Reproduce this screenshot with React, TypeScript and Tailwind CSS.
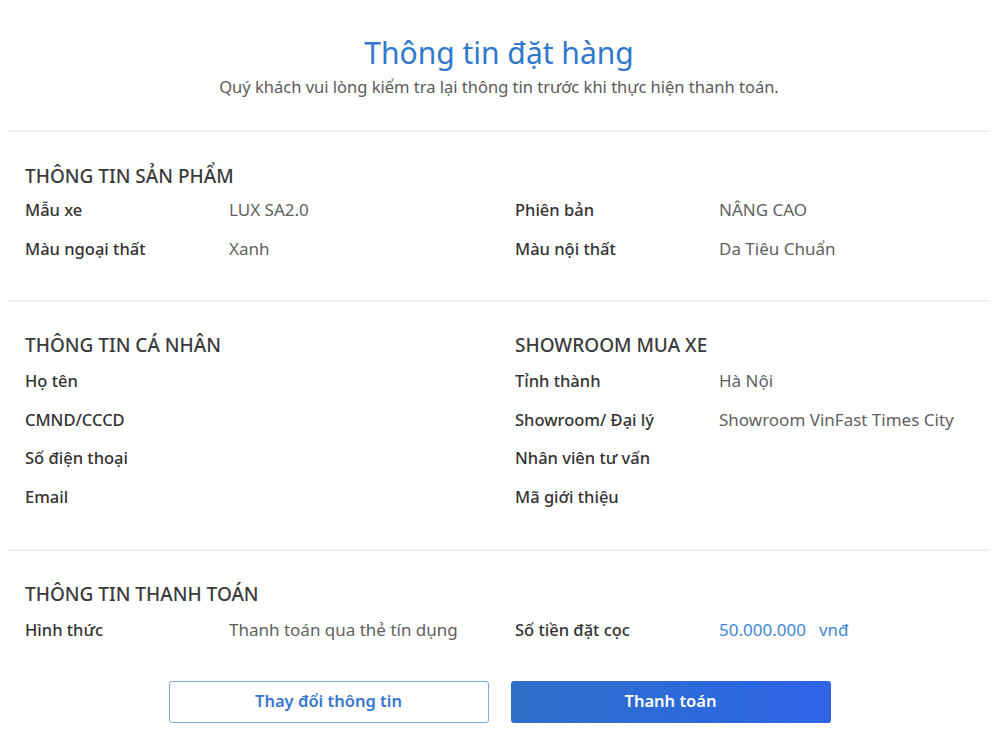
import React from "react";

const font = { fontFamily: '"Noto Sans", "Open Sans", sans-serif' };

function Row({ label, value, blue }: { label: string; value?: React.ReactNode; blue?: boolean }) {
  return (
    <div className="flex h-6 items-center leading-6">
      <div className="w-[204px] shrink-0 text-[16.5px] font-medium text-[#333333]">{label}</div>
      {value ? (
        <div className={blue ? "text-[17px] text-[#3f86d6]" : "text-[17px] text-[#5f5f5f]"}>{value}</div>
      ) : null}
    </div>
  );
}

function Header({ children }: { children: React.ReactNode }) {
  return <div className="h-6 text-[19px] font-medium uppercase leading-6 text-[#3a3a3a]">{children}</div>;
}

export default function App() {
  return (
    <div className="min-h-[741px] w-[1000px] bg-white" style={font}>
      <div className="mx-[8px] w-[982px]">
        <div className="flex flex-col items-center pt-[33px]">
          <h1 className="text-[30px] leading-[40px] text-[#2f78cc]">Thông tin đặt hàng</h1>
          <p className="mt-[4px] text-[16.5px] leading-[20px] text-[#5a5a5a]">
            Quý khách vui lòng kiểm tra lại thông tin trước khi thực hiện thanh toán.
          </p>
        </div>
        <div className="mt-[33px] h-[2px] bg-[#eef0f0]" />

        <section className="px-[17px] pt-[32px] pb-[39px]">
          <Header>Thông tin sản phẩm</Header>
          <div className="mt-[10px] grid grid-cols-[490px_1fr] gap-y-[15px]">
            <Row label="Mẫu xe" value="LUX SA2.0" />
            <Row label="Phiên bản" value="NÂNG CAO" />
            <Row label="Màu ngoại thất" value="Xanh" />
            <Row label="Màu nội thất" value="Da Tiêu Chuẩn" />
          </div>
        </section>
        <div className="h-[2px] bg-[#eef0f0]" />

        <section className="grid grid-cols-[490px_1fr] px-[17px] pt-[31px] pb-[40px]">
          <div>
            <Header>Thông tin cá nhân</Header>
            <div className="mt-[12px] flex flex-col gap-[14.5px]">
              <Row label="Họ tên" />
              <Row label="CMND/CCCD" />
              <Row label="Số điện thoại" />
              <Row label="Email" />
            </div>
          </div>
          <div>
            <Header>Showroom mua xe</Header>
            <div className="mt-[12px] flex flex-col gap-[14.5px]">
              <Row label="Tỉnh thành" value="Hà Nội" />
              <Row label="Showroom/ Đại lý" value="Showroom VinFast Times City" />
              <Row label="Nhân viên tư vấn" />
              <Row label="Mã giới thiệu" />
            </div>
          </div>
        </section>
        <div className="h-[2px] bg-[#eef0f0]" />

        <section className="px-[17px] pt-[31px]">
          <Header>Thông tin thanh toán</Header>
          <div className="mt-[12px] grid grid-cols-[490px_1fr]">
            <Row label="Hình thức" value="Thanh toán qua thẻ tín dụng" />
            <Row
              label="Số tiền đặt cọc"
              blue
              value={
                <span>
                  50.000.000<span className="ml-[13px]">vnđ</span>
                </span>
              }
            />
          </div>
        </section>

        <div className="mt-[39px] flex justify-center gap-[22px] pl-[1px]">
          <button className="h-[42px] w-[320px] rounded-[3px] border-[1.5px] border-[#82aae2] bg-white text-[16.5px] font-semibold text-[#3a78cf]">
            Thay đổi thông tin
          </button>
          <button className="h-[42px] w-[320px] rounded-[3px] bg-gradient-to-r from-[#2c70c8] to-[#2f63e9] text-[16.5px] font-semibold text-white">
            Thanh toán
          </button>
        </div>
      </div>
    </div>
  );
}
